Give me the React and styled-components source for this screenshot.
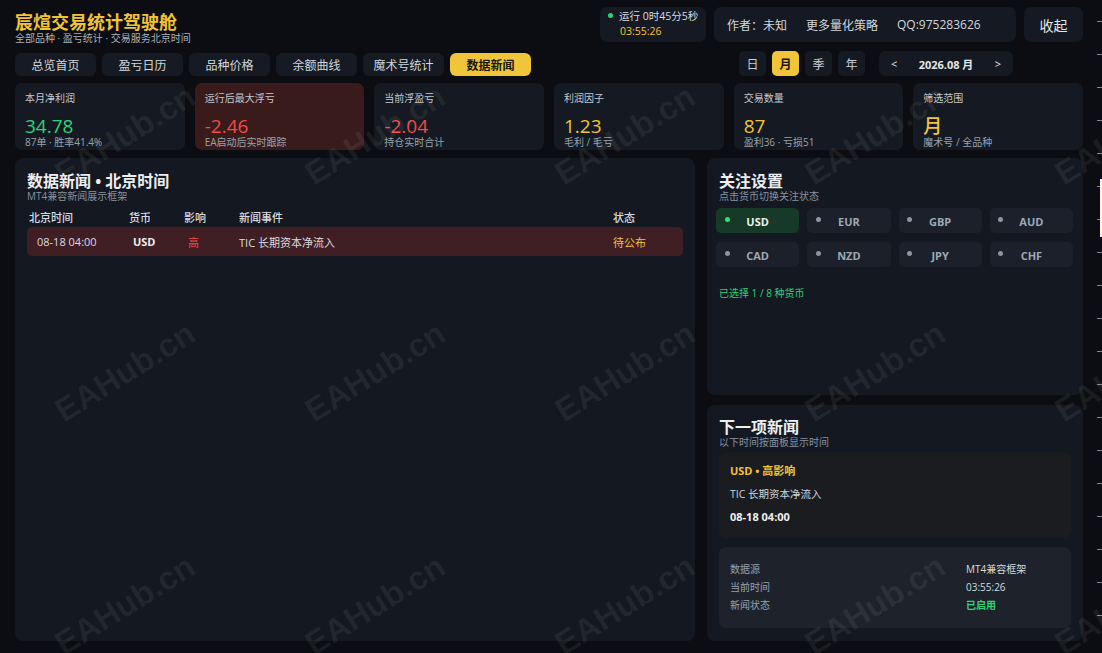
import React from "react";
import styled, { createGlobalStyle } from "styled-components";

const GlobalStyle = createGlobalStyle`
  html, body { margin: 0; padding: 0; background: #0b0d12; }
  body { font-family: "Open Sans", "Noto Sans CJK SC", sans-serif; color: #d6dae0; }
  * { box-sizing: border-box; }
`;

const Page = styled.div`
  position: relative;
  width: 1102px;
  height: 653px;
  display: flex;
  overflow: hidden;
  background: #0b0d12;
`;

const Main = styled.div`
  flex: 1;
  display: flex;
  flex-direction: column;
  padding: 7px 14px 12px 15px;
`;

const Ruler = styled.div`
  position: relative;
  width: 5px;
  background: repeating-linear-gradient(to bottom, transparent 0 32px, #7d8898 32px 33px);
  background-position: 0 -11px;
`;

const RulerThumb = styled.div`
  position: absolute;
  right: 0;
  top: 179px;
  width: 2px;
  height: 58px;
  background: #fff6dc;
`;

const Header = styled.div`
  display: flex;
  justify-content: space-between;
  height: 69px;
`;

const Brand = styled.div`
  display: flex;
  flex-direction: column;
`;

const Title = styled.div`
  margin-top: 3px;
  font-size: 18px;
  line-height: 22px;
  font-weight: 700;
  color: #f2c335;
  font-family: "Noto Sans CJK SC", sans-serif;
`;

const Subtitle = styled.div`
  font-size: 10px;
  line-height: 12px;
  color: #a9b2bd;
`;

const Tabs = styled.div`
  display: flex;
  gap: 6px;
  margin-top: 9px;
`;

const Tab = styled.div`
  width: 81px;
  height: 23px;
  border-radius: 6px;
  display: flex;
  align-items: center;
  justify-content: center;
  font-size: 12px;
  background: ${(p) => (p.$active ? "#f0c53a" : "#161b23")};
  color: ${(p) => (p.$active ? "#1a1608" : "#d2d6dc")};
  font-weight: ${(p) => (p.$active ? 700 : 400)};
`;

const Controls = styled.div`
  display: flex;
  flex-direction: column;
  align-items: flex-end;
  gap: 9px;
`;

const TopRow = styled.div`
  display: flex;
  gap: 8px;
  height: 35px;
`;

const Box = styled.div`
  background: #151a22;
  border-radius: 7px;
`;

const StatusBox = styled(Box)`
  width: 106px;
  padding: 2px 0 0 8px;
`;

const StatusLine = styled.div`
  display: flex;
  align-items: center;
  gap: 6px;
  font-size: 10.5px;
  line-height: 15px;
  color: #d6dae0;
  white-space: nowrap;
`;

const Dot = styled.span`
  width: 5px;
  height: 5px;
  border-radius: 50%;
  flex: none;
  background: ${(p) => p.$color};
`;

const Clock = styled.div`
  margin-left: 12px;
  font-size: 10.5px;
  line-height: 15px;
  color: #f2c335;
`;

const InfoBox = styled(Box)`
  width: 302px;
  padding: 0 13px;
  display: flex;
  align-items: center;
  gap: 19px;
  font-size: 12px;
  color: #d2d6dc;
`;

const CollapseBtn = styled(Box)`
  width: 59px;
  display: flex;
  align-items: center;
  justify-content: center;
  font-size: 14px;
  color: #e2e5e9;
`;

const BottomRow = styled.div`
  display: flex;
  align-items: center;
  gap: 6px;
  margin-right: 70px;
`;

const PeriodBtn = styled.div`
  width: 27px;
  height: 25px;
  border-radius: 5px;
  display: flex;
  align-items: center;
  justify-content: center;
  font-size: 12px;
  background: ${(p) => (p.$active ? "#f0c53a" : "#151a22")};
  color: ${(p) => (p.$active ? "#1a1608" : "#c9ced5")};
  font-weight: ${(p) => (p.$active ? 700 : 400)};
`;

const DateNav = styled(Box)`
  margin-left: 8px;
  width: 134px;
  height: 25px;
  padding: 0 12px;
  display: flex;
  align-items: center;
  justify-content: space-between;
  font-size: 11px;
  color: #e4e7ea;
  b { font-weight: 700; }
`;

const StatGrid = styled.div`
  margin-top: 7px;
  height: 67px;
  display: grid;
  grid-template-columns: repeat(6, 1fr);
  gap: 10px;
`;

const StatCard = styled.div`
  border-radius: 7px;
  padding: 9px 10px 0;
  background: ${(p) => (p.$alert ? "#3a1b1c" : "#151a22")};
  display: flex;
  flex-direction: column;
`;

const StatLabel = styled.div`
  font-size: 10px;
  line-height: 13px;
  color: #c3c8cf;
`;

const StatValue = styled.div`
  margin-top: 11px;
  font-size: 19px;
  line-height: 20px;
  font-weight: 500;
  color: ${(p) => p.$color};
`;

const StatSub = styled.div`
  font-size: 10px;
  line-height: 12px;
  color: #99a2ad;
`;

const Body = styled.div`
  margin-top: 8px;
  flex: 1;
  display: grid;
  grid-template-columns: 680px 1fr;
  gap: 12px;
`;

const Panel = styled.div`
  background: #141820;
  border-radius: 8px;
  padding: 14px 12px 12px;
  display: flex;
  flex-direction: column;
`;

const PanelTitle = styled.div`
  font-size: 16px;
  line-height: 18px;
  font-weight: 700;
  color: #eceef0;
  font-family: "Open Sans", "Noto Sans CJK SC", sans-serif;
`;

const PanelSub = styled.div`
  font-size: 10px;
  line-height: 12px;
  color: #8893a0;
`;

const TableHead = styled.div`
  margin-top: 9px;
  padding-left: 2px;
  display: grid;
  grid-template-columns: 100px 55px 55px 1fr 70px;
  font-size: 11px;
  line-height: 14px;
  font-weight: 500;
  color: #d8dce2;
`;

const TableRow = styled.div`
  margin-top: 2px;
  height: 29px;
  padding-left: 10px;
  border-radius: 5px;
  background: #3f1f23;
  display: grid;
  grid-template-columns: 96px 55px 51px 1fr 70px;
  align-items: center;
  font-size: 11px;
  color: #d9dce0;
`;

const Cell = styled.span`
  color: ${(p) => p.$color || "inherit"};
  font-weight: ${(p) => (p.$bold ? 700 : 400)};
`;

const Side = styled.div`
  display: grid;
  grid-template-rows: 1fr 1fr;
  gap: 10px;
  min-height: 0;
`;

const SidePanel = styled(Panel)`
  min-height: 0;
  padding: ${(p) => p.$pad};
`;

const ChipGrid = styled.div`
  margin: 6px 0 0 -3px;
  display: grid;
  grid-template-columns: repeat(4, 1fr);
  column-gap: 8px;
  row-gap: 9px;
`;

const Chip = styled.div`
  height: 25px;
  border-radius: 5px;
  display: grid;
  grid-template-columns: 22px 1fr 22px;
  align-items: center;
  font-size: 11px;
  font-weight: 700;
  background: ${(p) => (p.$on ? "#173a28" : "#1b202a")};
  color: ${(p) => (p.$on ? "#ecefe9" : "#9ea8b4")};
  span:nth-child(2) { text-align: center; padding-top: 2px; }
  ${Dot} { justify-self: center; margin-top: -3px; }
`;

const SelectedNote = styled.div`
  margin-top: 20px;
  font-size: 10px;
  line-height: 12px;
  color: #2fd27a;
`;

const NextCard = styled.div`
  margin-top: 4px;
  height: 86px;
  border-radius: 7px;
  background: #1a1c20;
  padding: 12px 11px 0;
  display: flex;
  flex-direction: column;
  gap: 9px;
  font-size: 11px;
  line-height: 14px;
`;

const NextLine = styled.div`
  color: ${(p) => p.$color || "#d2d4d7"};
  font-weight: ${(p) => (p.$bold ? 700 : 400)};
  font-size: ${(p) => (p.$bold ? "11px" : "10.5px")};
`;

const InfoCard = styled.div`
  margin-top: 9px;
  border-radius: 7px;
  background: #1e232b;
  padding: 13px 11px 14px;
  display: grid;
  grid-template-columns: 1fr 94px;
  font-size: 10px;
  line-height: 18px;
`;

const InfoKey = styled.span`
  color: #97a1ad;
`;

const InfoVal = styled.span`
  color: ${(p) => p.$color || "#d6d9dd"};
  font-weight: ${(p) => (p.$bold ? 700 : 400)};
`;

const Watermarks = styled.div`
  position: absolute;
  inset: 0;
  pointer-events: none;
  z-index: 5;
`;

const Mark = styled.div`
  position: absolute;
  transform: translate(-50%, -50%) rotate(-32deg);
  font-family: "Liberation Sans", Arial, sans-serif;
  font-size: 33px;
  font-weight: 700;
  white-space: nowrap;
  color: rgba(255, 255, 255, 0.065);
`;

const tabs = ["总览首页", "盈亏日历", "品种价格", "余额曲线", "魔术号统计", "数据新闻"];
const periods = ["日", "月", "季", "年"];

const stats = [
  { label: "本月净利润", value: "34.78", color: "#2fd27a", sub: "87单 · 胜率41.4%" },
  { label: "运行后最大浮亏", value: "-2.46", color: "#f04a48", sub: "EA启动后实时跟踪", alert: true },
  { label: "当前浮盈亏", value: "-2.04", color: "#f04a48", sub: "持仓实时合计" },
  { label: "利润因子", value: "1.23", color: "#f2c335", sub: "毛利 / 毛亏" },
  { label: "交易数量", value: "87", color: "#f2c335", sub: "盈利36 · 亏损51" },
  { label: "筛选范围", value: "月", color: "#f2c335", sub: "魔术号 / 全品种" },
];

const currencies = ["USD", "EUR", "GBP", "AUD", "CAD", "NZD", "JPY", "CHF"];

const markCols = [125, 375, 625, 875, 1125];
const markRows = [135, 372, 605];

export default function App() {
  return (
    <>
      <GlobalStyle />
      <Page>
        <Main>
          <Header>
            <Brand>
              <Title>宸煊交易统计驾驶舱</Title>
              <Subtitle>全部品种 · 盈亏统计 · 交易服务北京时间</Subtitle>
              <Tabs>
                {tabs.map((t) => (
                  <Tab key={t} $active={t === "数据新闻"}>{t}</Tab>
                ))}
              </Tabs>
            </Brand>
            <Controls>
              <TopRow>
                <StatusBox>
                  <StatusLine>
                    <Dot $color="#2fd27a" style={{ marginTop: -3 }} />
                    运行 0时45分5秒
                  </StatusLine>
                  <Clock>03:55:26</Clock>
                </StatusBox>
                <InfoBox>
                  <span>作者：未知</span>
                  <span>更多量化策略</span>
                  <span>QQ:975283626</span>
                </InfoBox>
                <CollapseBtn>收起</CollapseBtn>
              </TopRow>
              <BottomRow>
                {periods.map((p) => (
                  <PeriodBtn key={p} $active={p === "月"}>{p}</PeriodBtn>
                ))}
                <DateNav>
                  <span>&lt;</span>
                  <b>2026.08 月</b>
                  <span>&gt;</span>
                </DateNav>
              </BottomRow>
            </Controls>
          </Header>

          <StatGrid>
            {stats.map((s) => (
              <StatCard key={s.label} $alert={s.alert}>
                <StatLabel>{s.label}</StatLabel>
                <StatValue $color={s.color}>{s.value}</StatValue>
                <StatSub>{s.sub}</StatSub>
              </StatCard>
            ))}
          </StatGrid>

          <Body>
            <Panel>
              <PanelTitle>数据新闻 • 北京时间</PanelTitle>
              <PanelSub>MT4兼容新闻展示框架</PanelSub>
              <TableHead>
                <span>北京时间</span>
                <span>货币</span>
                <span>影响</span>
                <span>新闻事件</span>
                <span>状态</span>
              </TableHead>
              <TableRow>
                <Cell>08-18 04:00</Cell>
                <Cell $bold $color="#eceef0">USD</Cell>
                <Cell $color="#f04a48">高</Cell>
                <Cell>TIC 长期资本净流入</Cell>
                <Cell $color="#f2c335">待公布</Cell>
              </TableRow>
            </Panel>

            <Side>
              <SidePanel $pad="14px 10px 0 12px">
                <PanelTitle>关注设置</PanelTitle>
                <PanelSub>点击货币切换关注状态</PanelSub>
                <ChipGrid>
                  {currencies.map((c) => (
                    <Chip key={c} $on={c === "USD"}>
                      <Dot $color={c === "USD" ? "#2ee07a" : "#8b96a2"} />
                      <span>{c}</span>
                    </Chip>
                  ))}
                </ChipGrid>
                <SelectedNote>已选择 1 / 8 种货币</SelectedNote>
              </SidePanel>

              <SidePanel $pad="13px 12px 12px">
                <PanelTitle>下一项新闻</PanelTitle>
                <PanelSub>以下时间按面板显示时间</PanelSub>
                <NextCard>
                  <NextLine $bold $color="#f2c335">USD • 高影响</NextLine>
                  <NextLine>TIC 长期资本净流入</NextLine>
                  <NextLine $bold $color="#eef0f2">08-18 04:00</NextLine>
                </NextCard>
                <InfoCard>
                  <InfoKey>数据源</InfoKey>
                  <InfoVal>MT4兼容框架</InfoVal>
                  <InfoKey>当前时间</InfoKey>
                  <InfoVal>03:55:26</InfoVal>
                  <InfoKey>新闻状态</InfoKey>
                  <InfoVal $bold $color="#2fd27a">已启用</InfoVal>
                </InfoCard>
              </SidePanel>
            </Side>
          </Body>
        </Main>
        <Ruler>
          <RulerThumb />
        </Ruler>
        <Watermarks>
          {markRows.map((y) =>
            markCols.map((x) => (
              <Mark key={`${x}-${y}`} style={{ left: x, top: y }}>EAHub.cn</Mark>
            ))
          )}
        </Watermarks>
      </Page>
    </>
  );
}
